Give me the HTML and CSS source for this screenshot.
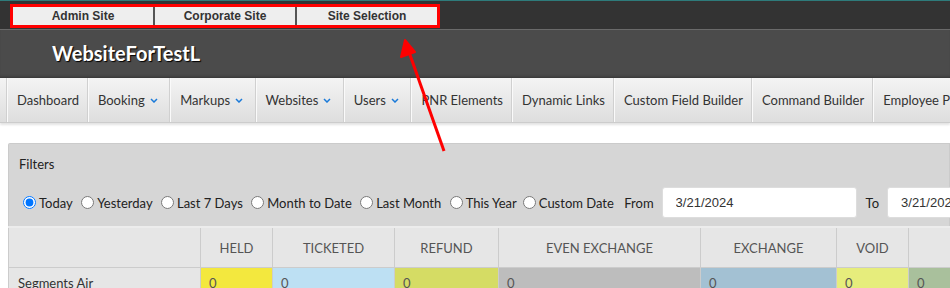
FILE: index.html
```html
<!DOCTYPE html>
<html>
<head>
<title>WebsiteForTestL</title>
<link rel="stylesheet" href="styles.css">
</head>
<body>
<div class="topbar">
  <div class="sitelinks">
    <a class="sitelink" href="#">Admin Site</a>
    <a class="sitelink" href="#">Corporate Site</a>
    <a class="sitelink" href="#">Site Selection</a>
  </div>
</div>
<div class="header">
  <span class="site-title">WebsiteForTestL</span>
</div>
<div class="nav">
  <a class="nav-item" href="#">Dashboard</a>
  <a class="nav-item drop" href="#">Booking <svg class="chev" width="8" height="5" viewBox="0 0 8 5"><path d="M1 1 L4 4 L7 1" fill="none" stroke="#1a7ad9" stroke-width="1.5"/></svg></a>
  <a class="nav-item drop" href="#">Markups <svg class="chev" width="8" height="5" viewBox="0 0 8 5"><path d="M1 1 L4 4 L7 1" fill="none" stroke="#1a7ad9" stroke-width="1.5"/></svg></a>
  <a class="nav-item drop" href="#">Websites <svg class="chev" width="8" height="5" viewBox="0 0 8 5"><path d="M1 1 L4 4 L7 1" fill="none" stroke="#1a7ad9" stroke-width="1.5"/></svg></a>
  <a class="nav-item drop" href="#">Users <svg class="chev" width="8" height="5" viewBox="0 0 8 5"><path d="M1 1 L4 4 L7 1" fill="none" stroke="#1a7ad9" stroke-width="1.5"/></svg></a>
  <a class="nav-item" href="#">PNR Elements</a>
  <a class="nav-item" href="#">Dynamic Links</a>
  <a class="nav-item" href="#">Custom Field Builder</a>
  <a class="nav-item" href="#">Command Builder</a>
  <a class="nav-item" href="#">Employee Profiles</a>
</div>

<div class="content">
  <div class="filters">
    <div class="filters-title">Filters</div>
    <div class="filter-row">
      <label><input type="radio" name="range" checked>Today</label>
      <label><input type="radio" name="range">Yesterday</label>
      <label><input type="radio" name="range">Last 7 Days</label>
      <label><input type="radio" name="range">Month to Date</label>
      <label><input type="radio" name="range">Last Month</label>
      <label class="tight"><input type="radio" name="range">This Year</label>
      <label><input type="radio" name="range">Custom Date</label>
      <span class="date-label">From</span>
      <input class="date" type="text" value="3/21/2024">
      <span class="date-label to">To</span>
      <input class="date" type="text" value="3/21/2024">
    </div>
  </div>
  <table class="stats">
    <tr>
      <th class="first"></th>
      <th class="c-held">HELD</th>
      <th class="c-ticketed">TICKETED</th>
      <th class="c-refund">REFUND</th>
      <th class="c-even">EVEN EXCHANGE</th>
      <th class="c-exchange">EXCHANGE</th>
      <th class="c-void">VOID</th>
      <th class="c-other"></th>
    </tr>
    <tr>
      <td class="first">Segments Air</td>
      <td class="held">0</td>
      <td class="ticketed">0</td>
      <td class="refund">0</td>
      <td class="even">0</td>
      <td class="exchange">0</td>
      <td class="void">0</td>
      <td class="other">0</td>
    </tr>
  </table>
</div>

<svg class="arrow" width="950" height="288" viewBox="0 0 950 288">
  <line x1="444" y1="151" x2="409" y2="52" stroke="#ff0000" stroke-width="3"/>
  <polygon points="405,40 401,57 415,52" fill="#ff0000" stroke="#ff0000" stroke-width="2" stroke-linejoin="round"/>
</svg>
</body>
</html>
```
FILE: styles.css
```css
/* Admin portal look */

body
{ margin: 0;
  font-family: Lato, "Open Sans", sans-serif;
  font-size: 13px;
  color: #333;
  background: #fff;
  overflow: hidden;
}

a { text-decoration: none; color: inherit; }

/* Top bar with site switch */

.topbar
{ height: 29px;
  background: #333;
  border-top: 1px solid #2e7b7b;
  padding: 3px 0 0 10px;
  box-sizing: border-box;
}

.sitelinks
{ display: inline-flex;
  border: 3px solid #ff0000;
  height: 24px;
  box-sizing: border-box;
  width: 430px;
  background: #555;
}

.sitelink
{ flex: 1 1 0;
  background: #eee;
  border-right: 2px solid #555;
  text-align: center;
  font-family: "Liberation Sans", Arial, sans-serif;
  font-weight: bold;
  font-size: 12px;
  line-height: 18px;
  color: #333;
}

.sitelink:last-child { border-right: 0; }

/* Header */

.header
{ height: 49px;
  background: #4b4b4b;
  border-top: 1px solid #6a6a6a;
  box-shadow: inset 0 -3px 3px -2px #333;
  padding-left: 52px;
  display: flex;
  align-items: center;
  box-sizing: border-box;
}

.site-title
{ color: #fff;
  font-weight: bold;
  font-size: 20px;
  text-shadow: 1px 1px 1px #000;
  margin-top: -2px;
}

/* Navigation */

.nav
{ height: 44px;
  display: flex;
  padding-left: 7px;
  background: linear-gradient(#f4f4f4, #dedede);
  border-bottom: 1px solid #ccc;
  box-shadow: 0 2px 2px #e4e4e4;
  white-space: nowrap;
}

.nav-item
{ display: flex;
  align-items: center;
  padding: 0 9px 0 9px;
  border-left: 1px solid #fafafa;
  box-shadow: -1px 0 0 #d0d0d0;
  font-size: 13px;
  color: #333;
}

.nav-item.drop { padding-right: 12.5px; }

.chev
{ margin: 1px 0 0 5px;
  flex: none;
}

/* Content */

.content
{ padding: 20px 0 0 8px;
}

.filters
{ background: #d6d6d6;
  border: 1px solid #cbcbcb;
  border-bottom: 0;
  border-radius: 2px 0 0 0;
  padding: 12px 0 8px 10px;
}

.filters-title
{ font-size: 13px;
  color: #222;
  margin-bottom: 15px;
}

.filter-row
{ display: flex;
  align-items: center;
  white-space: nowrap;
  color: #222;
}

.filter-row label
{ display: flex;
  align-items: center;
  margin-right: 4.4px;
}

.filter-row label.tight { margin-right: 2px; }

.filter-row input[type=radio]
{ margin: 0 3px 0 4px;
  width: 13px;
  height: 13px;
}

.date-label
{ margin: 0 8px 0 6px;
}

.date-label.to { margin-left: 9px; }

.date
{ width: 195px;
  height: 31px;
  box-sizing: border-box;
  border: 1px solid #ddd;
  border-radius: 3px;
  background: #fff;
  padding-left: 13px;
  font-family: "Liberation Sans", Arial, sans-serif;
  font-size: 13px;
  color: #333;
  flex: none;
}

/* Stats table */

table.stats
{ border-collapse: collapse;
  border-top: 2px solid #ececec;
  width: 1000px;
  table-layout: fixed;
}

table.stats th
{ height: 39px;
  padding: 0;
  background: #e6e6e6;
  border: 1px solid #ccc;
  font-weight: normal;
  color: #555;
  font-size: 13px;
}

table.stats td
{ height: 21px;
  border: 1px solid #ccc;
  padding: 0 0 0 8px;
  vertical-align: top;
  line-height: 30px;
  color: #555;
}

table.stats td.first
{ background: #e6e6e6;
  padding-left: 9px;
  color: #333;
}

th.first { width: 191px; }
th.c-held { width: 71px; }
th.c-ticketed { width: 121px; }
th.c-refund { width: 103px; }
th.c-even { width: 201px; }
th.c-exchange { width: 135px; }
th.c-void { width: 71px; }
th.c-other { width: 99px; }

td.held { background: #f3e83e; }
td.ticketed { background: #bde0f3; }
td.refund { background: #d5dc64; }
td.even { background: #bdbdbd; }
td.exchange { background: #a3c1d3; }
td.void { background: #e6ed7c; }
td.other { background: #a9c09c; }

/* Annotation arrow over the page */

.arrow
{ position: absolute;
  left: 0;
  top: 0;
  pointer-events: none;
}
```
